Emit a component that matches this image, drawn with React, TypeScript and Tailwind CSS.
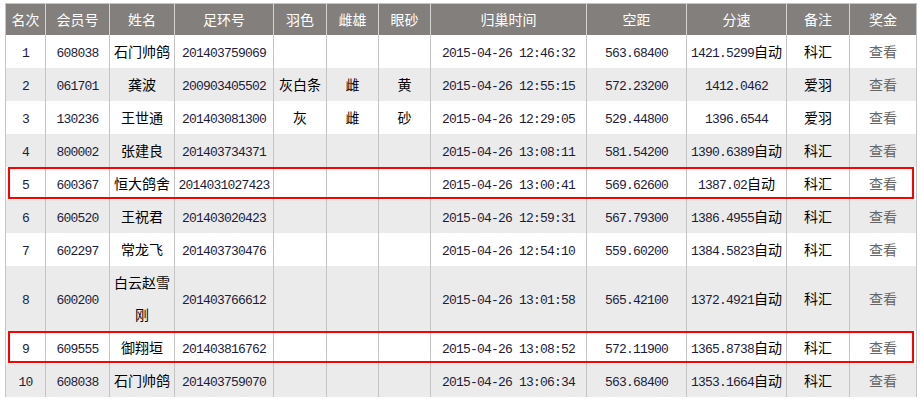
// Race results table - pigeon homing ranking list

const rows = [
  { rank: '1', member: '608038', name: '石门帅鸽', ring: '201403759069', color: '', sex: '', eye: '', time: '2015-04-26 12:46:32', dist: '563.68400', speed: '1421.5299', auto: true, note: '科汇' },
  { rank: '2', member: '061701', name: '龚波', ring: '200903405502', color: '灰白条', sex: '雌', eye: '黄', time: '2015-04-26 12:55:15', dist: '572.23200', speed: '1412.0462', auto: false, note: '爱羽' },
  { rank: '3', member: '130236', name: '王世通', ring: '201403081300', color: '灰', sex: '雌', eye: '砂', time: '2015-04-26 12:29:05', dist: '529.44800', speed: '1396.6544', auto: false, note: '爱羽' },
  { rank: '4', member: '800002', name: '张建良', ring: '201403734371', color: '', sex: '', eye: '', time: '2015-04-26 13:08:11', dist: '581.54200', speed: '1390.6389', auto: true, note: '科汇' },
  { rank: '5', member: '600367', name: '恒大鸽舍', ring: '2014031027423', color: '', sex: '', eye: '', time: '2015-04-26 13:00:41', dist: '569.62600', speed: '1387.02', auto: true, note: '科汇', mark: true },
  { rank: '6', member: '600520', name: '王祝君', ring: '201403020423', color: '', sex: '', eye: '', time: '2015-04-26 12:59:31', dist: '567.79300', speed: '1386.4955', auto: true, note: '科汇' },
  { rank: '7', member: '602297', name: '常龙飞', ring: '201403730476', color: '', sex: '', eye: '', time: '2015-04-26 12:54:10', dist: '559.60200', speed: '1384.5823', auto: true, note: '科汇' },
  { rank: '8', member: '600200', name: '白云赵雪刚', ring: '201403766612', color: '', sex: '', eye: '', time: '2015-04-26 13:01:58', dist: '565.42100', speed: '1372.4921', auto: true, note: '科汇' },
  { rank: '9', member: '609555', name: '御翔垣', ring: '201403816762', color: '', sex: '', eye: '', time: '2015-04-26 13:08:52', dist: '572.11900', speed: '1365.8738', auto: true, note: '科汇', mark: true },
  { rank: '10', member: '608038', name: '石门帅鸽', ring: '201403759070', color: '', sex: '', eye: '', time: '2015-04-26 13:06:34', dist: '563.68400', speed: '1353.1664', auto: true, note: '科汇' },
];

const headers = [
  { label: '名次', w: 'w-[40px]' },
  { label: '会员号', w: 'w-[64px]' },
  { label: '姓名', w: 'w-[65px]' },
  { label: '足环号', w: 'w-[99px]' },
  { label: '羽色', w: 'w-[53px]' },
  { label: '雌雄', w: 'w-[52px]' },
  { label: '眼砂', w: 'w-[52px]' },
  { label: '归巢时间', w: 'w-[156px]' },
  { label: '空距', w: 'w-[100px]' },
  { label: '分速', w: 'w-[100px]' },
  { label: '备注', w: 'w-[63px]' },
  { label: '奖金', w: 'w-[67px]' },
];

const cjk = "font-['Noto_Sans_CJK_SC',sans-serif] text-[14px]";
const mono = "font-['Liberation_Mono',monospace] text-[13px] tracking-[-0.8px] text-[#1c1c3a]";

export default function App() {
  return (
    <div className="min-h-screen bg-white pt-[3px] pl-[5px]">
      <table className="table-fixed border-collapse w-[911px] border-t border-[#c4c4c4] text-center">
        <thead>
          <tr className="bg-[#827f7d] h-[31px]">
            {headers.map((h, i) => (
              <th
                key={h.label}
                className={`${h.w} ${cjk} font-normal text-white p-0 leading-[30px] border-x border-x-[#d4d4d4] ${i === 0 ? 'border-l-[#c4c4c4]' : ''} ${i === headers.length - 1 ? 'border-r-[#c4c4c4]' : ''}`}
              >
                {h.label}
              </th>
            ))}
          </tr>
        </thead>
        <tbody>
          {rows.map((r, idx) => (
            <tr key={idx} className={idx % 2 === 0 ? 'bg-white' : 'bg-[#ebebeb]'}>
              <td className="relative">
                <span className={mono}>{r.rank}</span>
                {r.mark && (
                  <span className="pointer-events-none absolute left-[2px] top-0 h-[32px] w-[906px] border-2 border-[#ff0000]" />
                )}
              </td>
              <td><span className={mono}>{r.member}</span></td>
              <td className={`${cjk} text-black`}>{r.name}</td>
              <td><span className={mono}>{r.ring}</span></td>
              <td className={`${cjk} text-black`}>{r.color}</td>
              <td className={`${cjk} text-black`}>{r.sex}</td>
              <td className={`${cjk} text-black`}>{r.eye}</td>
              <td><span className={`${mono} whitespace-pre`}>{r.time}</span></td>
              <td><span className={mono}>{r.dist}</span></td>
              <td className="whitespace-nowrap">
                <span className={mono}>{r.speed}</span>
                {r.auto && <span className={`${cjk} text-black`}>自动</span>}
              </td>
              <td className={`${cjk} text-black`}>{r.note}</td>
              <td className={`${cjk} text-[#666]`}>查看</td>
            </tr>
          ))}
        </tbody>
      </table>
      <style>{`
        tbody td { border-left: 1px solid #c4c4c4; border-right: 1px solid #c4c4c4; padding: 0 2px 1px; line-height: 32px; vertical-align: middle; font-family: 'Noto Sans CJK SC', sans-serif; font-size: 14px; }
        tbody td > span { line-height: 14px; }
      `}</style>
    </div>
  );
}
